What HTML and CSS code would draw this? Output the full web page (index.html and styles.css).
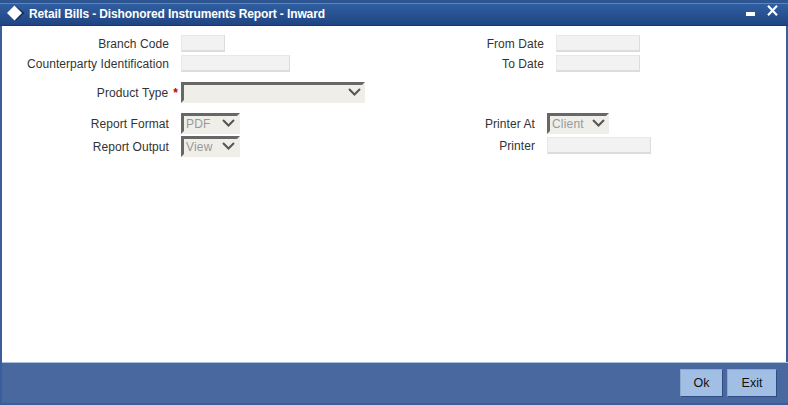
FILE: index.html
```html
<!DOCTYPE html>
<html lang="en">
<head>
<meta charset="utf-8">
<title>Retail Bills - Dishonored Instruments Report - Inward</title>
<link rel="stylesheet" href="styles.css">
</head>
<body>
<div class="window">
  <header class="titlebar">
    <svg class="logo" width="19" height="16" viewBox="0 0 19 16"><path d="M9 .5 18.500 8 10 15.500 8.500 15 15.500 8 8.500 1Z" fill="#0e2a5c"/><path d="M8.500 .5 16 8 8.500 15.500 1 8Z" fill="#fff"/></svg>
    <h1 class="title">Retail Bills - Dishonored Instruments Report - Inward</h1>
    <svg class="minimize" width="9" height="4" viewBox="0 0 9 4"><rect width="9" height="4" fill="#fff"/></svg>
    <svg class="close" width="11" height="11" viewBox="0 0 11 11"><path d="M1 .8 10 10.200M10 .8 1 10.200" stroke="#fff" stroke-width="2.200" fill="none"/></svg>
  </header>
  <main class="content">
    <section class="band band-top">
      <div class="col col-left">
        <div class="row"><label class="label">Branch Code</label><div class="input w44"></div></div>
        <div class="row"><label class="label">Counterparty Identification</label><div class="input w109"></div></div>
      </div>
      <div class="col col-right">
        <div class="row"><label class="label">From Date</label><div class="input w84"></div></div>
        <div class="row"><label class="label">To Date</label><div class="input w84"></div></div>
      </div>
    </section>
    <section class="band band-product">
      <label class="label">Product Type<span class="req">*</span></label>
      <div class="select w184"><svg class="chev" width="13" height="8" viewBox="0 0 13 8"><path d="M1 1 6.500 6.500 12 1" stroke="#555" stroke-width="2" fill="none"/></svg></div>
    </section>
    <section class="band band-report">
      <div class="col col-left">
        <div class="row row-select"><label class="label">Report Format</label><div class="select w59">PDF<svg class="chev" width="13" height="8" viewBox="0 0 13 8"><path d="M1 1 6.500 6.500 12 1" stroke="#555" stroke-width="2" fill="none"/></svg></div></div>
        <div class="row row-select"><label class="label">Report Output</label><div class="select w59">View<svg class="chev" width="13" height="8" viewBox="0 0 13 8"><path d="M1 1 6.500 6.500 12 1" stroke="#555" stroke-width="2" fill="none"/></svg></div></div>
      </div>
      <div class="col col-printer">
        <div class="row row-select"><label class="label">Printer At</label><div class="select w62">Client<svg class="chev" width="13" height="8" viewBox="0 0 13 8"><path d="M1 1 6.500 6.500 12 1" stroke="#555" stroke-width="2" fill="none"/></svg></div></div>
        <div class="row row-printer"><label class="label">Printer</label><div class="input w104"></div></div>
      </div>
    </section>
  </main>
  <footer class="footer">
    <button class="btn btn-ok" type="button">Ok</button>
    <button class="btn btn-exit" type="button">Exit</button>
  </footer>
</div>
</body>
</html>
```
FILE: styles.css
```css
* { box-sizing: border-box; }
html, body { margin: 0; padding: 0; }
body { width: 788px; height: 405px; overflow: hidden; font-family: "Liberation Sans", Arial, sans-serif; font-size: 12px; color: #333; }
.window { width: 788px; height: 405px; display: flex; flex-direction: column; background: #3a5e9b; }
.titlebar { height: 26px; flex: none; display: flex; align-items: center; padding: 3px 10px 0 6px; border-bottom: 1px solid #1c3a70; background: linear-gradient(#2c5591 0 3px, #5c84bd 3px 4px, #2f5fa1 4px, #2a5494 50%, #1f4483); color: #fff; }
.logo { flex: none; align-self: flex-start; margin: 2px 4px 0 0; }
.title { margin: 0 auto 0 0; font-size: 12px; font-weight: bold; letter-spacing: -0.115px; color: #fff; line-height: 16px; }
.minimize { flex: none; align-self: flex-start; margin: 9px 12px 0 0; }
.close { flex: none; align-self: flex-start; margin-top: 2px; }
.content { flex: 1; margin: 0 2px; background: #fff; }
.band { display: flex; }
.band-top { padding-top: 9px; }
.band-product { padding-top: 7px; align-items: center; }
.band-report { padding-top: 10px; }
.col { display: flex; flex-direction: column; flex: none; }
.col-left { width: 300px; }
.col-right { width: 400px; }
.row { display: flex; align-items: center; margin-bottom: 3px; }
.row-select { margin-bottom: 2px; }
.row-printer { margin-top: 1px; }
.label { display: block; flex: none; width: 167px; text-align: right; margin-right: 12px; white-space: nowrap; line-height: 14px; letter-spacing: 0.075px; }
.col-right .label { width: 242px; }
.col-printer .label { width: 233px; }
.band-product .label { width: 176px; margin-right: 3px; }
.req { color: #c00000; font-weight: bold; margin-left: 5px; }
.input { height: 17px; flex: none; background: #f2f2f2; border: 1px solid #e8e8e8; border-right-color: #dcdcdc; border-bottom: 2px solid #dcdcdc; }
.select { position: relative; flex: none; height: 21px; background: #efeee9; border: 3px solid #efeee9; border-top-color: #676767; border-left-color: #676767; color: #999; padding-left: 2px; line-height: 16px; font-size: 12px; letter-spacing: 0.2px; }
.chev { position: absolute; right: 2px; top: 3px; }
.w184 .chev, .w62 .chev { right: 1px; }
.w44 { width: 44px; } .w59 { width: 59px; } .w62 { width: 62px; } .w84 { width: 84px; }
.w104 { width: 104px; } .w109 { width: 109px; } .w184 { width: 184px; }
.footer { height: 43px; flex: none; display: flex; justify-content: flex-end; gap: 4px; padding: 6px 11px 0 0; margin: 0 0 0 2px; background: #48689f; border-top: 1px solid #a9c0df; border-bottom: 2px solid #3c5c94; }
.btn { height: 28px; padding: 0; font: 12.500px "Liberation Sans", Arial, sans-serif; color: #111; background: #a1bfe4; border: 1px solid #2f4d80; border-top-color: #8fa8cc; border-left-color: #8fa8cc; }
.btn-ok { width: 43px; }
.btn-exit { width: 50px; }
```
